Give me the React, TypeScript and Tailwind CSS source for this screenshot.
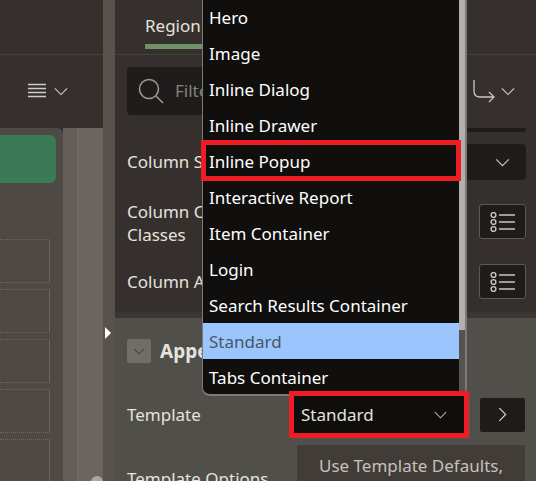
const menuItems = [
  'Hero',
  'Image',
  'Inline Dialog',
  'Inline Drawer',
  'Inline Popup',
  'Interactive Report',
  'Item Container',
  'Login',
  'Search Results Container',
  'Standard',
  'Tabs Container',
];

const Chevron = ({ className }: { className: string }) => (
  <svg viewBox="0 0 16 10" fill="none" stroke="currentColor" strokeWidth="1.3" className={className}>
    <path d="M1 1.5 L8 8.5 L15 1.5" />
  </svg>
);

const ListIcon = () => (
  <svg width="26" height="20" viewBox="0 0 26 20" fill="none" stroke="#c9c6c2" strokeWidth="1.4">
    <circle cx="3.5" cy="3" r="2.4" />
    <circle cx="3.5" cy="10" r="2.4" />
    <circle cx="3.5" cy="17" r="2.4" />
    <path d="M9 3 H25 M9 10 H25 M9 17 H25" />
  </svg>
);

const ListButton = () => (
  <div className="flex h-[35px] w-[47px] items-center justify-center rounded-[3px] border border-[#5c5854] bg-[#1f1d1b]">
    <ListIcon />
  </div>
);

export default function App() {
  return (
    <div className="relative flex h-[481px] w-[536px] overflow-hidden bg-[#35302d] font-['Noto_Sans',sans-serif] text-[17px] text-[#e4e2df]">
      {/* Left canvas */}
      <div className="flex w-[103px] shrink-0 flex-col">
        <div className="h-[55px] shrink-0 border-b border-[#45403c] bg-[#35302d]" />
        <div className="flex h-[73px] shrink-0 items-center justify-end gap-[8px] bg-[#35302d] pr-[35px] pb-[1px] text-[#cfccc8]">
          <svg width="18" height="16" viewBox="0 0 18 16" stroke="#d0cdc9" strokeWidth="1.3">
            <path d="M0 1.5 H18 M0 5.5 H18 M0 9.5 H18 M0 13.5 H18" />
          </svg>
          <Chevron className="h-[9px] w-[14px]" />
        </div>
        <div className="flex min-h-0 flex-1 overflow-hidden">
          <div className="flex w-[63px] flex-col rounded-tr-[6px] bg-[#4e4944] pt-[7px]">
            <div className="h-[48px] w-[56px] shrink-0 rounded-r-[6px] bg-[#3a7a55]" />
            <div className="mt-[56px] flex flex-col gap-[6px]">
              {[0, 1, 2, 3, 4].map((i) => (
                <div key={i} className="h-[44px] w-[50px] shrink-0 border-t border-r border-b border-dotted border-[#6b6660] [border-right-style:solid]" />
              ))}
            </div>
          </div>
          <div className="w-[15px] border-r border-dotted border-[#86807a] bg-[#645d57]" />
          <div className="relative flex-1 bg-[#6c645e]">
            <div className="absolute top-[348px] left-[13px] h-[12px] w-[12px] rounded-full bg-[#aaa6a2]" />
          </div>
        </div>
      </div>

      {/* Gutter */}
      <div className="relative w-[12px] shrink-0 bg-[#57524c]">
        <div className="absolute top-[327px] left-[2px] h-0 w-0 border-y-[6px] border-l-[6px] border-y-transparent border-l-white" />
      </div>

      {/* Property panel */}
      <div className="flex min-w-0 flex-1 flex-col">
        <div className="h-[55px] shrink-0 border-b border-[#45403c] pt-[13px] pl-[30px]">
          <div className="h-[36px] w-[57px] border-b-[5px] border-[#6f9068] leading-[26px]">Region</div>
        </div>
        <div className="flex shrink-0 items-center justify-between pt-[12px] pr-[21px] pl-[12px]">
          <div className="flex h-[48px] w-[250px] items-center rounded-[4px] bg-[#1f1d1b] pl-[11px]">
            <svg width="26" height="26" viewBox="0 0 26 26" fill="none" stroke="#9a9692" strokeWidth="1.6">
              <circle cx="11" cy="11" r="9.5" />
              <path d="M18 18 L25 25" />
            </svg>
            <span className="ml-[11px] text-[#85817d]">Filter</span>
          </div>
          <div className="flex items-center gap-[6px] text-[#cfccc8]">
            <svg width="22" height="24" viewBox="0 0 22 24" fill="none" stroke="#c9c6c2" strokeWidth="1.3">
              <path d="M1 1 V12 Q1 18 7 18 H21 M16 13 L21 18 L16 23" />
            </svg>
            <Chevron className="h-[9px] w-[14px]" />
          </div>
        </div>
        <div className="mt-[13px] mr-[10px] h-[4px] w-[200px] shrink-0 self-end rounded-b-[3px] bg-[#1f1d1b]" />
        <div className="flex shrink-0 items-center justify-between pt-[12px] pr-[10px] pl-[12px]">
          <span>Column Selector</span>
          <div className="flex h-[36px] w-[200px] items-center justify-end rounded-[4px] bg-[#1f1d1b] pr-[16px] text-[#c9c6c2]">
            <Chevron className="h-[9px] w-[15px]" />
          </div>
        </div>
        <div className="flex shrink-0 items-start justify-between pt-[24px] pr-[10px] pl-[12px]">
          <span className="-mt-[4px] leading-[23px]">
            Column CSS
            <br />
            Classes
          </span>
          <ListButton />
        </div>
        <div className="flex shrink-0 items-center justify-between pt-[18px] pr-[10px] pl-[12px]">
          <span>Column Attributes</span>
          <ListButton />
        </div>
        <div className="mt-[13px] h-[6px] shrink-0 bg-[#3a3632]" />
        <div className="flex min-h-0 flex-1 flex-col bg-[#504f49] pr-[11px] pl-[12px]">
          <div className="flex shrink-0 items-center gap-[9px] pt-[21px]">
            <div className="flex h-[24px] w-[24px] items-center justify-center rounded-[2px] bg-[#716e69] text-[#2c2a28]">
              <Chevron className="h-[7px] w-[12px]" />
            </div>
            <span className="text-[19px] leading-[24px] font-bold">Appearance</span>
          </div>
          <div className="mt-[33px] flex shrink-0 items-center">
            <span className="w-[167px]">Template</span>
            <div className="relative z-10 flex h-[37px] w-[170px] items-center justify-between bg-[#0f0e0d] pr-[16px] pl-[7px] outline-[5px] outline-[#ee1c25]">
              <span>Standard</span>
              <Chevron className="h-[8px] w-[15px] text-[#b5b2ae]" />
              <div className="absolute -top-[2px] -right-[6px] -bottom-[4px] border-r border-dotted border-[#3d7a57]" />
            </div>
            <div className="ml-[16px] flex h-[34px] w-[45px] items-center justify-center rounded-[2px] bg-[#1f1d1b] text-[#d8d5d1]">
              <Chevron className="h-[9px] w-[15px] -rotate-90" />
            </div>
          </div>
          <div className="mt-[12px] flex shrink-0 items-start">
            <span className="w-[170px] pt-[21px]">Template Options</span>
            <div className="h-[60px] w-[228px] rounded-t-[2px] bg-[#413c38] pt-[8px] text-center text-[#c4c1bd]">Use Template Defaults,</div>
          </div>
        </div>
      </div>

      {/* Open select list */}
      <div className="absolute -top-[1px] left-[202px] flex h-[397px] w-[265px] rounded-b-[8px] border-r-[2px] border-b-[2px] border-l-[1px] border-[#7d7b78] bg-[#100f0e]">
        <div className="w-[256px]">
          {menuItems.map((item) => (
            <div
              key={item}
              className={`relative h-[36px] px-[6px] leading-[38px] ${item === 'Standard' ? 'bg-[#9ac6fd] text-[#4b5563]' : 'text-white'}`}
            >
              {item}
              {item === 'Inline Popup' && (
                <div className="absolute -top-[3px] -right-[2px] -bottom-[2px] -left-[2px] border-[5px] border-[#ee1c25]" />
              )}
            </div>
          ))}
        </div>
        <div className="flex-1 bg-[#55534f]">
          <div className="h-[331px] bg-[#b2b0ae]" />
        </div>
      </div>
    </div>
  );
}
